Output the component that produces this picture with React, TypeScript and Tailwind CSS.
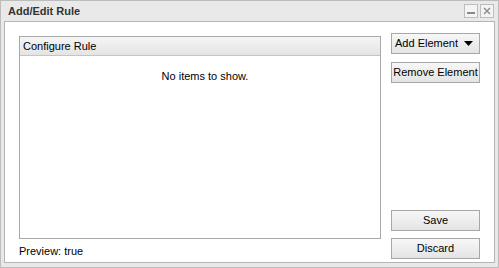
import React from 'react';

const FONT = { fontFamily: '"Liberation Sans", Arial, sans-serif' };

const BTN =
  'h-[21px] w-[89px] border border-[#a7a7a7] bg-gradient-to-b from-[#f7f7f7] to-[#e4e4e4] text-[11px] text-black flex items-center';

export default function App() {
  return (
    <div className="w-[499px] h-[268px] bg-white" style={FONT}>
      <div className="w-full h-full border border-[#bcbcbc] bg-[#e9e9e9] flex flex-col px-[3px] pb-[4px]">
        <div className="h-[20px] flex items-center justify-between shrink-0">
          <span className="text-[11px] font-bold text-[#333] pl-[4px]">Add/Edit Rule</span>
          <div className="flex gap-[2px] pr-[1px]">
            <div className="w-[14px] h-[14px] border border-[#bdbdbd] bg-[#f4f4f4] flex items-end justify-center pb-[3px]">
              <div className="w-[8px] h-[2px] bg-[#8a8a8a]" />
            </div>
            <div className="w-[14px] h-[14px] border border-[#bdbdbd] bg-[#f4f4f4] flex items-center justify-center">
              <svg width="8" height="8" viewBox="0 0 8 8">
                <path d="M1 1L7 7M7 1L1 7" stroke="#8a8a8a" strokeWidth="1.4" />
              </svg>
            </div>
          </div>
        </div>
        <div className="flex-1 border border-[#b5b5b5] bg-white flex gap-[10px] pl-[14px] pr-[14px] pt-[14px]">
          <div className="flex-1 flex flex-col">
            <div className="flex-1 border border-[#a9a9a9] flex flex-col">
              <div className="h-[19px] border-b border-[#c5c5c5] bg-gradient-to-b from-[#f5f5f5] to-[#e4e4e4] flex items-center pl-[3px] text-[11px] text-black">
                Configure Rule
              </div>
              <div className="pt-[12px] pl-[10px] text-center text-[11px] text-black">No items to show.</div>
            </div>
            <div className="h-[23px] flex items-center pt-[2px] text-[11px] text-black">Preview: true</div>
          </div>
          <div className="w-[89px] flex flex-col pb-[3px]">
            <button className={`${BTN} -mt-[3px] justify-between pl-[3px] pr-[6px]`}>
              <span>Add Element</span>
              <svg width="9" height="5" viewBox="0 0 9 5"><path d="M0 0H9L4.5 5Z" fill="#000" /></svg>
            </button>
            <button className={`${BTN} justify-center mt-[8px]`}>Remove Element</button>
            <div className="flex-1" />
            <button className={`${BTN} justify-center`}>Save</button>
            <button className={`${BTN} justify-center mt-[7px]`}>Discard</button>
          </div>
        </div>
      </div>
    </div>
  );
}
